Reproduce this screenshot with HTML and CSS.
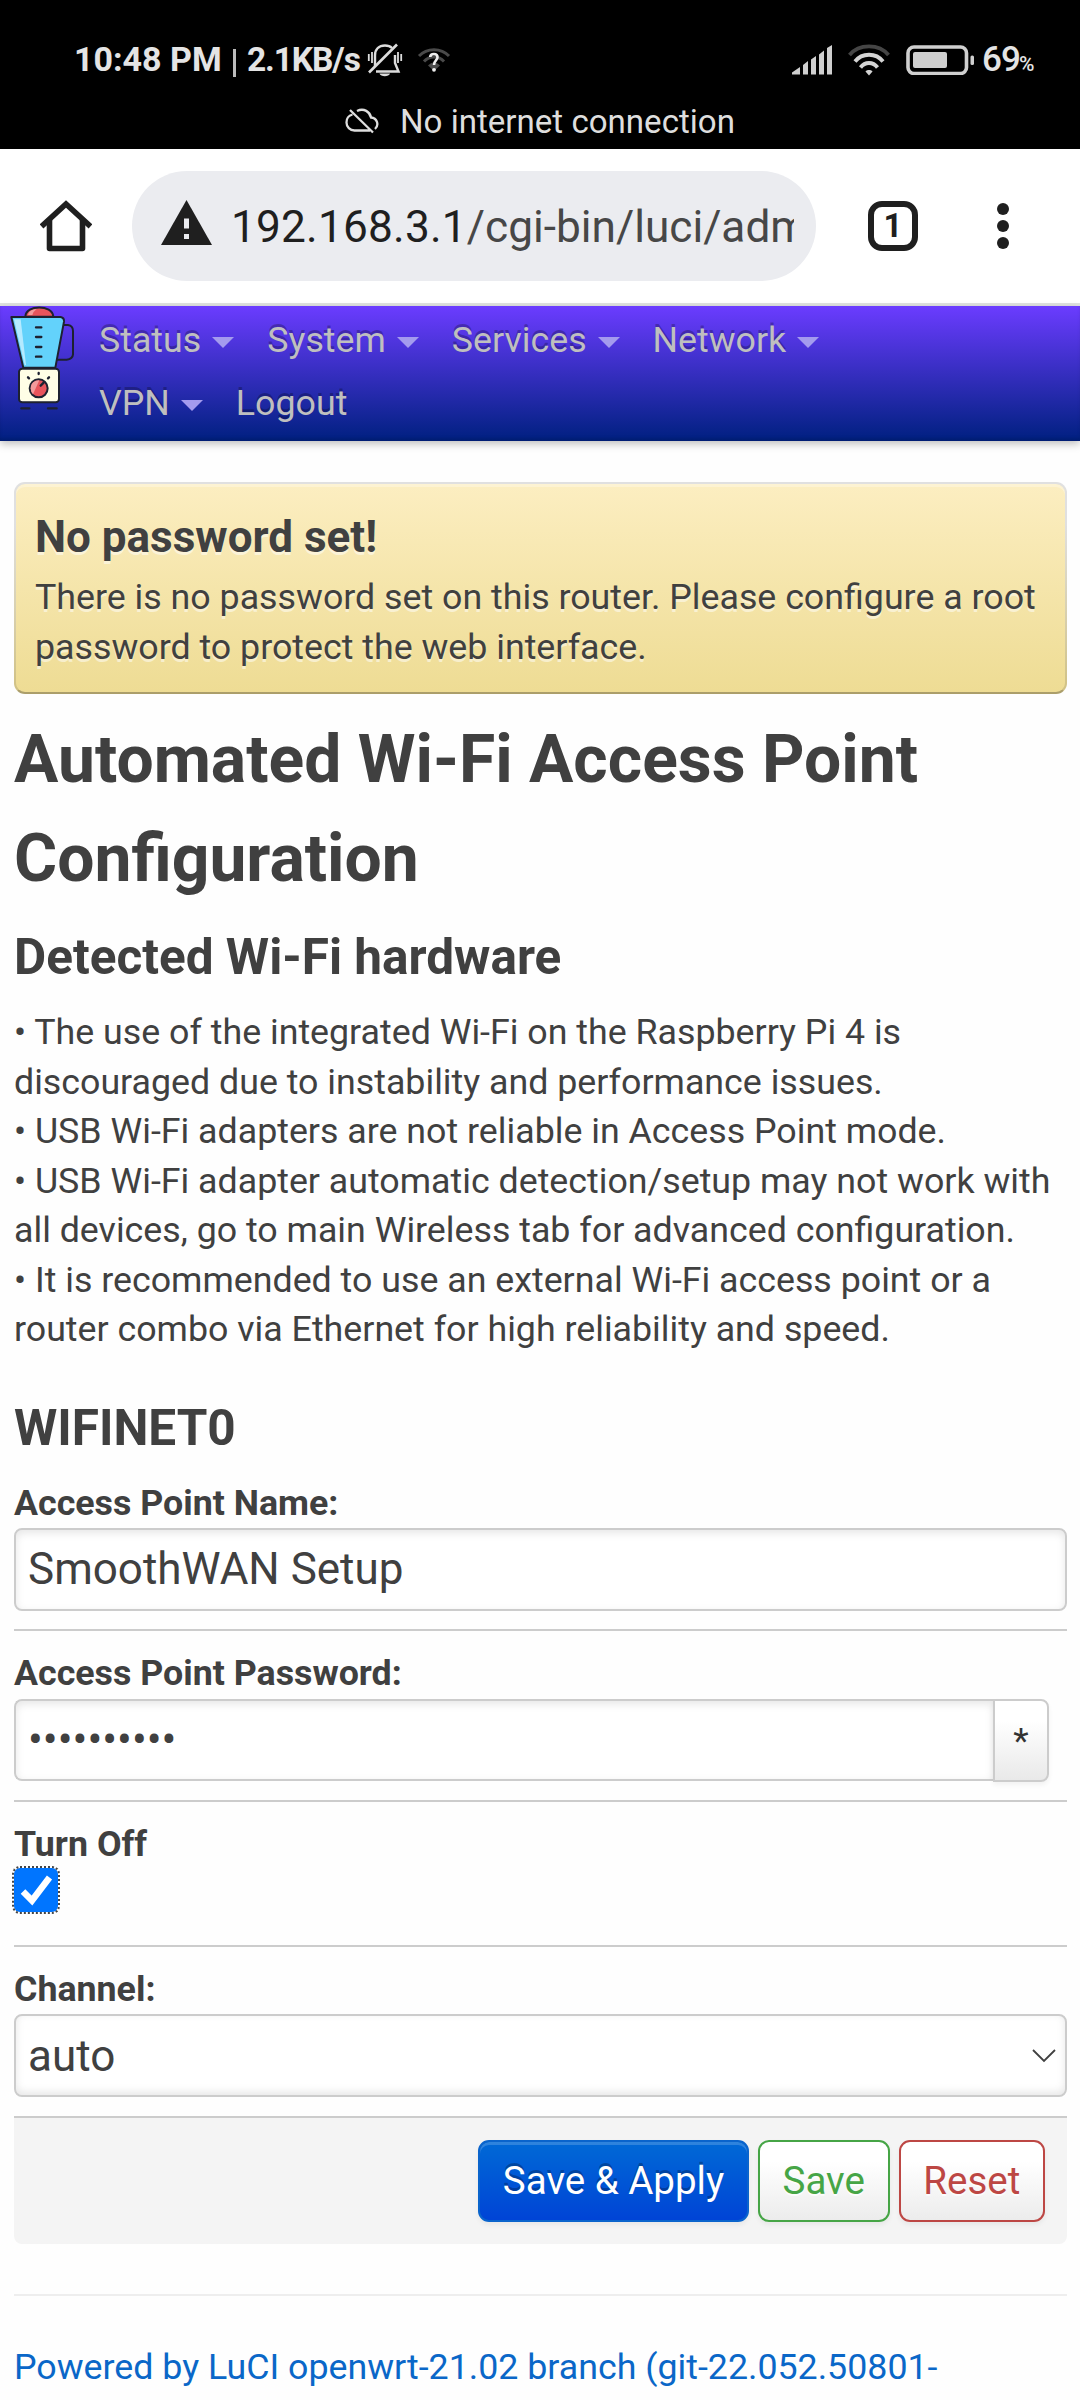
FILE: index.html
```html
<!DOCTYPE html>
<html lang="en">
<head>
<meta charset="utf-8">
<title>Automated Wi-Fi Access Point Configuration - LuCI</title>
<link rel="stylesheet" href="styles.css">
</head>
<body>
<div class="statusbar">
  <div class="status-row">
    <div class="status-left">
      <span class="clock">10:48 PM</span><span class="sep"></span><span class="speed">2.1KB/s</span>
      <svg class="bell" width="36" height="36" viewBox="0 0 36 36" fill="none" stroke="#dcdcdc">
        <path d="M8 24V13.500C8 7 12 3.500 18 3.500C21 3.500 23.500 4.500 25 6M28 13V21L31.500 29.500H9" stroke-width="2.400"/>
        <path d="M2 30.500L30 2.500" stroke-width="2.600"/>
        <path d="M1.800 12V19M5 10V21M31 10V21M34.200 12V19" stroke-width="1.800"/>
        <path d="M12.500 31.500H23C22 35 13.500 35 12.500 31.500Z" fill="#dcdcdc" stroke="none"/>
      </svg>
      <svg class="wifi-q" width="34" height="28" viewBox="0 0 34 28" fill="none" stroke="#4a4a4a" stroke-width="3">
        <path d="M2 10C10 1.500 24 1.500 32 10M7 15.500C12.500 9.500 21.500 9.500 27 15.500"/>
        <path d="M11 19.500C15 15.500 19 15.500 23 19.500L17 25Z" fill="#4a4a4a" stroke="none"/>
        <path d="M13.200 11C13.500 7 20.500 7 20.500 11.200C20.500 14.500 17 14.500 17 19" stroke="#eee" stroke-width="2.600"/>
        <circle cx="17" cy="23.800" r="1.900" fill="#eee" stroke="none"/>
      </svg>
    </div>
    <div class="status-right">
      <svg width="40" height="30" viewBox="0 0 40 30" fill="#cfcfcf">
        <path d="M0 30V27.500L8 22V29.500H0ZM11 20L16 16V29.500H11ZM19 14.500L24 11V29.500H19ZM27 9.500L32 5.500V29.500H27ZM35 3L40 0V29.500H35Z"/>
      </svg>
      <svg class="wifi" width="42" height="32" viewBox="0 0 42 32" fill="none" stroke="#d4d4d4" stroke-width="3.800">
        <path d="M1.500 11C11 -.5 31 -.5 40.500 11" stroke="#454545"/>
        <path d="M7 17.500C14 8.500 28 8.500 35 17.500M12.500 23.500C17 17.500 25 17.500 29.500 23.500"/>
        <path d="M17.500 27.500C18.500 25.500 23.500 25.500 24.500 27.500L21 31.500Z" fill="#d4d4d4" stroke="none"/>
      </svg>
      <svg class="battery" width="68" height="30" viewBox="0 0 68 30">
        <rect x="2" y="2" width="58.500" height="26.500" rx="6" fill="none" stroke="#cfcfcf" stroke-width="3.600"/>
        <rect x="7" y="7" width="34" height="16" rx="2" fill="#cfcfcf"/>
        <rect x="64.500" y="10.500" width="3.500" height="9.500" rx="1.500" fill="#cfcfcf"/>
      </svg>
      <span class="level">69</span><span class="percent">%</span>
    </div>
  </div>
  <div class="offline">
    <svg width="34" height="26" viewBox="0 0 34 26" fill="none" stroke="#dedede" stroke-width="2.300">
      <path d="M7.500 6.500C3.500 7.500 1.500 11 1.500 14.500C1.500 19 5 22.500 9.500 22.500H25M12 3C19 -.5 25 4 26 9.500C32 10 34.500 17 30 21M5 2L28 24.500"/>
    </svg>
    <span>No internet connection</span>
  </div>
</div>

<div class="toolbar">
  <svg class="home" width="52" height="52" viewBox="0 0 52 52" fill="none" stroke="#1f1f1f" stroke-width="5.600" stroke-linejoin="round">
    <path d="M1.500 26.500L26 4L50.500 26.500" stroke-linejoin="miter"/>
    <path d="M9.500 20V48.500H42.500V20"/>
  </svg>
  <div class="omnibox">
    <svg width="51" height="46" viewBox="0 0 51 46"><path d="M25.500 0L51 45H0Z" fill="#1f1f1f"/><path d="M23 18.500h5v10h-5zM23 34h5v5h-5z" fill="#ebecf0"/></svg>
    <div class="url"><span class="host">192.168.3.1</span>/cgi-bin/luci/adm</div>
  </div>
  <div class="tabs">1</div>
  <div class="menu"><i></i><i></i><i></i></div>
</div>

<header class="header">
  <svg class="logo" width="80" height="106" viewBox="0 33 240 318" stroke="#1d2130" stroke-width="6" stroke-linejoin="round" stroke-linecap="round">
    <path d="M188 90H204Q219 92 219 108V178Q218 192 200 194H172" fill="none"/>
    <path d="M76 65C78 28 157 28 160 65Z" fill="#e8545c"/>
    <path d="M84 60C87 47 98 43 110 42Q100 49 97 60Z" fill="#f39a9c" stroke="none"/>
    <path d="M34 66H182Q193 68 192 80L166 218H70Z" fill="#63d2fb"/>
    <path d="M42 73H62L78 210H74Z" fill="#b5eaff" stroke="none"/>
    <path d="M108 97H124M108 126H124M108 156H124M108 185H124M64 340H88M144 340H170" stroke-width="7"/>
    <rect x="57" y="221" width="120" height="101" rx="10" fill="#fffee6"/>
    <circle cx="116" cy="280" r="27" fill="#e8545c"/>
    <path d="M92 280C92 264 103 256 118 256L99 298Q92 291 92 280Z" fill="#f39a9c" stroke="none"/>
    <path d="M122 272L131 263M116 234V237M84 247L87 250M147 247L144 250" stroke-width="7"/>
  </svg>
  <nav class="nav">
    <a class="drop">Status</a><a class="drop">System</a><a class="drop">Services</a><a class="drop">Network</a><a class="drop">VPN</a><a>Logout</a>
  </nav>
</header>

<main class="page">
  <div class="alert">
    <h4>No password set!</h4>
    <p>There is no password set on this router. Please configure a root password to protect the web interface.</p>
  </div>
  <h2>Automated Wi-Fi Access Point Configuration</h2>
  <h3>Detected Wi-Fi hardware</h3>
  <p class="descr">• The use of the integrated Wi-Fi on the Raspberry Pi 4 is discouraged due to instability and performance issues.<br>
    • USB Wi-Fi adapters are not reliable in Access Point mode.<br>
    • USB Wi-Fi adapter automatic detection/setup may not work with all devices, go to main Wireless tab for advanced configuration.<br>
    • It is recommended to use an external Wi-Fi access point or a router combo via Ethernet for high reliability and speed.</p>
  <h3 class="section-title">WIFINET0</h3>
  <div class="field">
    <label>Access Point Name:</label>
    <div class="input">SmoothWAN Setup</div>
  </div>
  <div class="field">
    <label>Access Point Password:</label>
    <div class="password"><div class="input">••••••••••</div><div class="reveal">*</div></div>
  </div>
  <div class="field check-field">
    <label>Turn Off</label>
    <div class="checkbox"><svg width="44" height="44" viewBox="0 0 44 44"><path d="M9 23.500L18 32.500L35.500 9.500" fill="none" stroke="#fff" stroke-width="6.500"/></svg></div>
  </div>
  <div class="field">
    <label>Channel:</label>
    <div class="input select"><span>auto</span><svg width="24" height="14" viewBox="0 0 24 14"><path d="M1 1L12 12L23 1" fill="none" stroke="#404040" stroke-width="1.800"/></svg></div>
  </div>
  <div class="actions"><span class="btn apply">Save &amp; Apply</span><span class="btn save">Save</span><span class="btn reset">Reset</span></div>
  <footer>Powered by LuCI openwrt-21.02 branch (git-22.052.50801-</footer>
</main>
</body>
</html>
```
FILE: styles.css
```css
* { box-sizing: border-box; }
body {
  margin: 0;
  height: 2400px;
  overflow: hidden;
  background: #fefefe;
  color: #404040;
  font: 35.75px/49.5px Roboto, sans-serif;
}
svg { display: block; flex: none; }
h2, h3, h4, p { margin: 0; }

/* Android status bar */
.statusbar { height: 149px; background: #000; color: #e4e4e4; }
.status-row { height: 98px; padding: 20px 45px 0 74px; display: flex; justify-content: space-between; }
.status-left, .status-right { height: 80px; display: flex; align-items: center; }
.clock, .speed { font-weight: 700; font-size: 34px; white-space: nowrap; }
.clock { width: 159px; }
.speed { width: 119px; font-size: 33.5px; letter-spacing: -1.1px; }
.sep { width: 3px; height: 28px; margin-right: 11px; background: #bbb; margin-top: 6px; }
.bell { margin-left: 1px; }
.wifi-q { margin-left: 14px; }
.wifi { margin-left: 16px; }
.battery { margin-left: 16px; }
.level { margin-left: 8px; font-weight: 500; font-size: 35px; width: 37px; letter-spacing: -1px; }
.percent { font-size: 21px; font-weight: 500; padding-top: 10px; width: 16px; }
.offline { height: 48px; padding-left: 345px; display: flex; align-items: center; gap: 21px; font-size: 33.1px; color: #dedede; white-space: nowrap; }
.offline svg { margin-top: -3px; }

/* Browser toolbar */
.toolbar { height: 157px; padding: 0 71px 0 40px; border-bottom: 3px solid #e1e3e1; background: #fff; display: flex; align-items: center; }
.omnibox { width: 684px; height: 110px; margin-left: 40px; padding: 0 22px 0 29px; border-radius: 55px; background: #ebecf0; display: flex; align-items: center; gap: 19px; }
.omnibox svg { margin-top: -7px; }
.url { flex: 1; overflow: hidden; white-space: nowrap; font-size: 44.2px; line-height: 60px; padding-top: 2px; color: #474747; }
.host { color: #1f1f1f; letter-spacing: .2px; }
.tabs { width: 50px; height: 50px; margin-left: 52px; border: 6px solid #1f1f1f; border-radius: 14px; display: flex; align-items: center; justify-content: center; font-size: 33px; font-weight: 700; color: #1f1f1f; line-height: 38px; }
.menu { margin-left: 79px; display: flex; flex-direction: column; gap: 5px; }
.menu i { width: 12px; height: 12px; border-radius: 50%; background: #1f1f1f; }

/* Site header */
.header { position: relative; height: 135px; padding-left: 99px; background: linear-gradient(#6b3cff, #002080); box-shadow: 0 3px 8px rgba(0,0,0,.25), inset 0 -3px 3px rgba(0,0,0,.1); }
.logo { position: absolute; left: 0; top: 0; }
.nav { width: 800px; padding-top: 3px; display: flex; flex-wrap: wrap; gap: 0 33px; color: #bfbfbf; line-height: 63px; text-shadow: 0 -2.750px 0 rgba(0,0,0,.25); }
.nav a { display: flex; align-items: center; }
.drop::after { content: ""; margin: 4px 0 0 11px; border: 11px solid transparent; border-top-color: #a49bee; border-bottom: 0; }

/* Page body */
.page { padding: 41px 13px 0 14px; }
.alert { height: 212px; margin-bottom: 16px; padding: 20px 19px; border: 2px solid; border-color: rgba(0,0,0,.12) rgba(0,0,0,.12) rgba(0,0,0,.28); border-radius: 11px; background: linear-gradient(#fceec1, #eedc94) padding-box, linear-gradient(#fff 20%, #eedc94) border-box; box-shadow: inset 0 3px 0 rgba(255,255,255,.3); text-shadow: 0 2.750px 0 rgba(255,255,255,.5); }
h4 { font-size: 44px; line-height: 66px; margin-bottom: 3.4px; }
h2 { font-size: 66px; line-height: 99px; }
h3 { font-size: 49.500px; line-height: 99px; }
.descr { padding-top: 1px; }
.section-title { margin-top: 24px; }
.field { height: 170.9px; border-bottom: 2px solid #ccc; padding-top: 17px; }
.section-title + .field { height: 153.6px; padding-top: 0; }
label { display: block; padding-top: 1px; font-weight: 700; }
.input { height: 82.500px; padding: 0 12px; border: 2px solid #ccc; border-radius: 8px; background: #fff; box-shadow: inset 0 3px 8px rgba(0,0,0,.1); font-size: 44px; line-height: 78px; }
.password { display: flex; width: 1035px; }
.password .input { flex: 1; border-radius: 8px 0 0 8px; border-right: 0; }
.reveal { width: 56px; padding-top: 1px; border: 2px solid #ccc; border-radius: 0 8px 8px 0; background: linear-gradient(#fff, #fff 25%, #e9e9e9); box-shadow: 0 3px 5px rgba(0,0,0,.05); text-align: center; line-height: 78px; color: #333; }
.check-field { height: 145px; }
.checkbox { width: 44px; height: 44px; margin-top: -1px; background: #0075ff; border-radius: 6px; outline: 2px dotted #444; }
.select { display: flex; align-items: center; justify-content: space-between; padding-right: 9px; box-shadow: inset 0 -3px 8px rgba(0,0,0,.1); }
.actions { height: 126px; margin-bottom: 50px; padding: 22px 22px 0; display: flex; justify-content: flex-end; gap: 9px; background: #f4f4f4; border-radius: 0 0 8px 8px; }
.btn { height: 82.500px; padding: 0 22.7px; border: 2px solid; border-radius: 11px; font-size: 38.500px; line-height: 77px; box-shadow: 0 3px 5px rgba(0,0,0,.05); background: linear-gradient(#fff, #fff 25%, #ececec); text-shadow: 0 2px 0 rgba(255,255,255,.75); }
.apply { color: #fff; border-color: #0a64cc; background: linear-gradient(#0069d6, #0044d6); text-shadow: 0 -2.750px 0 rgba(0,0,0,.25); box-shadow: inset 0 3px 0 rgba(255,255,255,.18), 0 3px 5px rgba(0,0,0,.05); }
.save { color: #46a546; }
.reset { color: #bd4744; }
footer { border-top: 2px solid #eee; padding-top: 47px; color: #0a67c8; white-space: nowrap; }
```
